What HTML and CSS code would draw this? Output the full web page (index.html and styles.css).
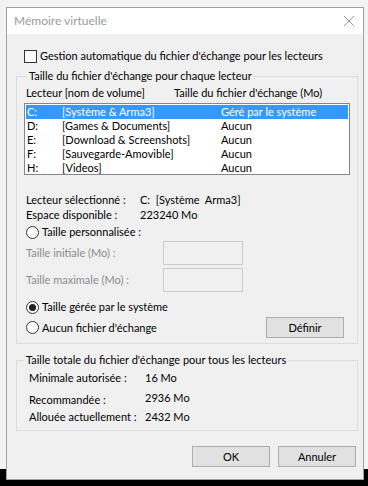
FILE: index.html
```html
<!DOCTYPE html>
<html lang="fr">
<head>
  <meta charset="UTF-8" />
  <title>Mémoire virtuelle</title>
  <link rel="stylesheet" href="styles.css">
</head>
<body>

  <div class="dialog">
    <!-- Title bar -->
    <div class="titlebar">
      <span class="title">Mémoire virtuelle</span>
      <svg class="close" width="12" height="12" viewBox="0 0 12 12">
        <path d="M1 1 L11 11 M11 1 L1 11" stroke="#9a9a9a" stroke-width="1" fill="none"/>
      </svg>
    </div>

    <div class="content">
      <label class="check-row">
        <span class="checkbox"></span>
        Gestion automatique du fichier d'échange pour les lecteurs
      </label>

      <fieldset class="group group-drives">
        <legend>Taille du fichier d'échange pour chaque lecteur</legend>

        <div class="list-head">
          <span class="col-name">Lecteur [nom de volume]</span>
          <span>Taille du fichier d'échange (Mo)</span>
        </div>

        <div class="listbox">
          <div class="row selected"><span class="drive">C:</span><span class="vol">[Système &amp; Arma3]</span><span>Géré par le système</span></div>
          <div class="row"><span class="drive">D:</span><span class="vol">[Games &amp; Documents]</span><span>Aucun</span></div>
          <div class="row"><span class="drive">E:</span><span class="vol">[Download &amp; Screenshots]</span><span>Aucun</span></div>
          <div class="row"><span class="drive">F:</span><span class="vol">[Sauvegarde-Amovible]</span><span>Aucun</span></div>
          <div class="row"><span class="drive">H:</span><span class="vol">[Videos]</span><span>Aucun</span></div>
        </div>

        <div class="info">
          <div class="info-row"><span class="info-label">Lecteur sélectionné :</span><span>C:&nbsp; [Système&nbsp; Arma3]</span></div>
          <div class="info-row"><span class="info-label">Espace disponible :</span><span>223240 Mo</span></div>
        </div>

        <label class="radio-row radio-custom">
          <span class="radio"></span>
          Taille personnalisée :
        </label>

        <div class="size-row">
          <span class="size-label">Taille initiale (Mo) :</span>
          <span class="textbox"></span>
        </div>
        <div class="size-row">
          <span class="size-label">Taille maximale (Mo) :</span>
          <span class="textbox"></span>
        </div>

        <label class="radio-row radio-first">
          <span class="radio checked"></span>
          Taille gérée par le système
        </label>
        <div class="last-row">
          <label class="radio-row">
            <span class="radio"></span>
            Aucun fichier d'échange
          </label>
          <button class="btn">Définir</button>
        </div>
      </fieldset>

      <fieldset class="group group-total">
        <legend>Taille totale du fichier d'échange pour tous les lecteurs</legend>
        <div class="total-row"><span class="total-label">Minimale autorisée :</span><span>16 Mo</span></div>
        <div class="total-row row-rec"><span class="total-label lowered">Recommandée :</span><span>2936 Mo</span></div>
        <div class="total-row"><span class="total-label">Allouée actuellement :</span><span>2432 Mo</span></div>
      </fieldset>

      <div class="actions">
        <button class="btn">OK</button>
        <button class="btn">Annuler</button>
      </div>
    </div>
  </div>

</body>
</html>
```

FILE: styles.css
```css
* {
  box-sizing: border-box;
}

body {
  margin: 0;
  width: 368px;
  height: 486px;
  overflow: hidden;
  background: linear-gradient(to bottom, #f3f3f3 0, #f3f3f3 469px, #000 469px);
  font-family: Lato, "Liberation Sans", sans-serif;
  font-size: 11px;
  line-height: 16px;
  color: #000;
  padding: 7px 4px 0 6px;
}

.dialog {
  width: 358px;
  height: 473px;
  border: 1px solid #a0a0a0;
  background: #f0f0f0;
  display: flex;
  flex-direction: column;
}

.titlebar {
  height: 26px;
  background: #fff;
  display: flex;
  align-items: center;
  justify-content: space-between;
  padding: 0 8px 0 7px;
  flex-shrink: 0;
}

.title {
  color: #999;
  font-size: 12px;
}

.content {
  padding: 0 5px 0 9px;
  display: flex;
  flex-direction: column;
}

.check-row {
  display: flex;
  align-items: center;
  gap: 3px;
  height: 16px;
  margin: 14px 0 0 8px;
}

.checkbox {
  width: 13px;
  height: 13px;
  border: 1px solid #333;
  background: #fff;
}

.group {
  margin: 0;
  padding: 0 7px 0 7px;
  border: 1px solid #dcdcdc;
  min-width: 0;
}

.group legend {
  padding: 0 2px;
  margin-left: 3px;
  line-height: 16px;
}

.group-drives {
  margin-top: 4px;
  height: 276px;
}

.list-head {
  display: flex;
  height: 18px;
  align-items: center;
  padding-left: 2px;
}

.col-name {
  width: 148px;
}

.listbox {
  border: 1px solid #828790;
  background: #fff;
  height: 72px;
  padding: 1px;
  margin-top: 1px;
}

.row {
  display: flex;
  height: 14px;
  line-height: 14px;
  padding-left: 1px;
}

.row.selected {
  background: #3399ff;
  color: #fff;
}

.drive {
  width: 35px;
}

.vol {
  width: 159px;
}

.info {
  margin-top: 17px;
  padding-left: 2px;
}

.info-row {
  display: flex;
  height: 15px;
  line-height: 15px;
}

.info-label {
  width: 114px;
}

.radio-row {
  display: flex;
  align-items: center;
  gap: 3px;
  height: 20px;
  padding-left: 2px;
}

.radio-custom {
  height: 17px;
  padding-top: 3px;
}

.radio {
  width: 13px;
  height: 13px;
  border: 1px solid #333;
  border-radius: 50%;
  background: #fff;
  display: flex;
  align-items: center;
  justify-content: center;
}

.radio.checked::after {
  content: '';
  width: 7px;
  height: 7px;
  border-radius: 50%;
  background: #222;
}

.size-row {
  display: flex;
  align-items: center;
  height: 27px;
  padding-left: 2px;
  color: #8c8c8c;
}

.size-label {
  width: 137px;
}

.textbox {
  width: 80px;
  height: 24px;
  border: 1px solid #cccccc;
  background: #f0f0f0;
}

.radio-first {
  margin-top: 4px;
}

.last-row {
  display: flex;
  align-items: center;
  justify-content: space-between;
  padding-right: 6px;
}

.btn {
  font-family: inherit;
  font-size: 11px;
  width: 78px;
  height: 21px;
  padding: 0;
  border: 1px solid #adadad;
  background: #e1e1e1;
  color: #000;
}

.group-total {
  margin-top: 8px;
  height: 79px;
  padding: 0 7px 0 12px;
}

.group-total legend {
  margin-left: -5px;
}

.total-row {
  display: flex;
  align-items: center;
  height: 20px;
}

.row-rec {
  height: 19px;
}

.total-label {
  width: 116px;
}

.lowered {
  position: relative;
  top: 2px;
}

.actions {
  display: flex;
  justify-content: flex-end;
  gap: 8px;
  margin-top: 15px;
  padding-right: 2px;
}
```
